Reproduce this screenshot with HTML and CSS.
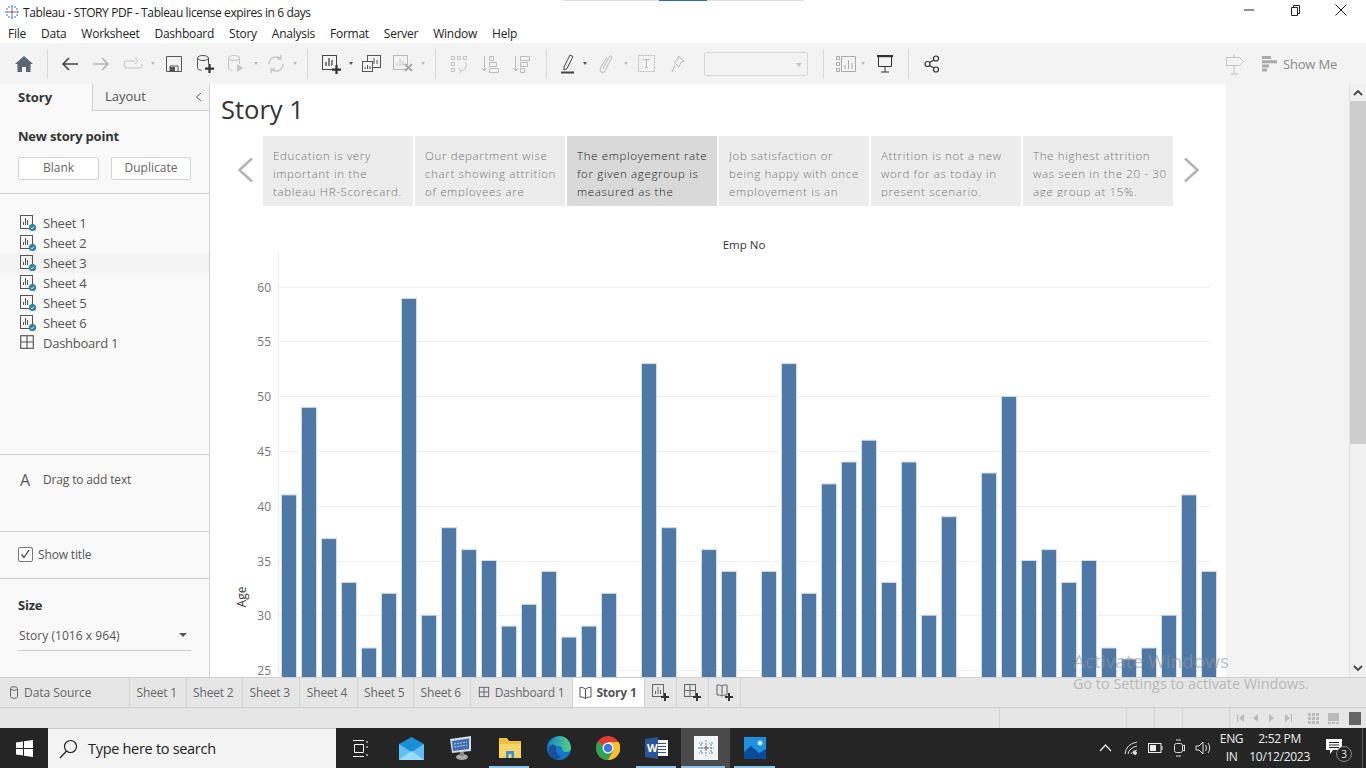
FILE: index.html
```html
<!DOCTYPE html>
<html lang="en">
<head>
    <meta charset="UTF-8">
    <title>Tableau - STORY PDF</title>
    <link rel="stylesheet" href="styles.css">
</head>
<body>

<svg class="defs" width="0" height="0">
    <defs>
        <linearGradient id="edgeTop" x1="0" y1="0" x2="1" y2="0">
            <stop offset="0" stop-color="#1b86c8"/>
            <stop offset="1" stop-color="#56cf7e"/>
        </linearGradient>
    </defs>
    <symbol id="sheet" viewBox="0 0 18 18">
        <rect x="1.5" y="1.5" width="12" height="12" fill="none" stroke="#555"/>
        <path d="M4.5 11V8M7.5 11V4M10.5 11V6" stroke="#555"/>
    </symbol>
    <symbol id="sheetok" viewBox="0 0 18 18">
        <rect x="1.5" y="1.5" width="12" height="13" fill="none" stroke="#555"/>
        <path d="M4.5 11V8M6.5 11V4M8.5 11V6" stroke="#555"/>
        <circle cx="13.5" cy="13.5" r="3.6" fill="#2f7f9f"/>
        <path d="M11.8 13.6l1.2 1.2 2-2.2" fill="none" stroke="#fff"/>
    </symbol>
    <symbol id="dash" viewBox="0 0 14 14">
        <rect x="1.5" y="1.5" width="11" height="11" fill="none" stroke="#555"/>
        <path d="M7 1.5v11M1.5 7h11" stroke="#555"/>
    </symbol>
    <symbol id="plus" viewBox="0 0 8 8">
        <path d="M4 0v8M0 4h8" stroke="#333" stroke-width="2"/>
    </symbol>
</svg>

<div class="app">
    <div class="loadbar"><span class="loadbar-on"></span></div>

    <!-- window title -->
    <header class="titlebar">
        <svg class="app-icon" width="18" height="18" viewBox="0 0 18 18">
            <path d="M9 2v14M2 9h14M4 5v8M14 5v8M5 4h8M5 14h8" stroke="#3f7fa6" stroke-dasharray="2 1"/>
            <path d="M7 9h4M9 7v4" stroke="#c25a4a"/>
        </svg>
        <span class="title-text">Tableau - STORY PDF - Tableau license expires in 6 days</span>
        <div class="win-buttons">
            <svg width="12" height="12" viewBox="0 0 12 12"><path d="M1 6h10" stroke="#222"/></svg>
            <svg width="12" height="12" viewBox="0 0 12 12"><path d="M2.5 3.5h6v8h-6zM4.5 3.5v-2h6v8h-2" fill="none" stroke="#222"/></svg>
            <svg width="12" height="12" viewBox="0 0 12 12"><path d="M.5.5l11 11M11.5.5l-11 11" stroke="#222"/></svg>
        </div>
    </header>

    <nav class="menubar">
        <span>File</span><span>Data</span><span>Worksheet</span><span>Dashboard</span><span>Story</span><span>Analysis</span><span>Format</span><span>Server</span><span>Window</span><span>Help</span>
    </nav>

    <!-- main toolbar -->
    <div class="toolbar">
        <span class="tool"><svg width="18" height="16" viewBox="0 0 18 16"><path d="M9 0L0 8h2.500v8h4.500v-5h4v5h4.500V8H18z" fill="#5b6670"/></svg></span>
        <i class="sep sep-home"></i>
        <span class="tool"><svg width="18" height="14" viewBox="0 0 18 14"><path d="M17 7H2M8 1L2 7l6 6" fill="none" stroke="#444" stroke-width="1.600"/></svg></span>
        <span class="tool"><svg width="18" height="14" viewBox="0 0 18 14"><path d="M1 7h15M10 1l6 6-6 6" fill="none" stroke="#b5b5b5" stroke-width="1.600"/></svg></span>
        <span class="tool tool-redo"><svg width="20" height="12" viewBox="0 0 20 12"><path d="M12 3H4Q1 3 1 6v1q0 3 3 3h12q3 0 3-3V6M12 0l3 3-3 3" fill="none" stroke="#c4c4c4"/></svg></span>
        <span class="caret"></span>
        <span class="tool"><svg width="16" height="16" viewBox="0 0 16 16"><path d="M.5.500h15v15H.500zM4 15.500V10h8v5.500" fill="none" stroke="#555"/><rect x="4" y="11" width="5" height="4.500" fill="#555"/></svg></span>
        <span class="tool"><svg width="18" height="18" viewBox="0 0 18 18"><ellipse cx="7" cy="3" rx="5.500" ry="2.500" fill="none" stroke="#555"/><path d="M1.500 3v10q0 2 4 2.300M12.500 3v6" fill="none" stroke="#555"/><use href="#plus" x="9" y="9" width="9" height="9"/></svg></span>
        <span class="tool"><svg width="18" height="18" viewBox="0 0 18 18"><ellipse cx="7" cy="3" rx="5.500" ry="2.500" fill="none" stroke="#c4c4c4"/><path d="M1.500 3v10q0 2 4 2.300M12.500 3v6" fill="none" stroke="#c4c4c4"/><path d="M10 9l6 4-6 4z" fill="#c4c4c4"/></svg></span>
        <span class="caret"></span>
        <span class="tool tool-less"><svg width="18" height="18" viewBox="0 0 18 18"><path d="M2 9a7 7 0 0 1 12-5M16 9a7 7 0 0 1-12 5M14 0v4h-4M4 18v-4h4" fill="none" stroke="#c4c4c4" stroke-width="1.300"/></svg></span>
        <span class="caret"></span>
        <i class="sep"></i>
        <span class="tool"><svg width="20" height="20" viewBox="0 0 20 20"><rect x="1.500" y="1.500" width="14" height="14" fill="none" stroke="#444"/><path d="M5 12V8M8 12V4M11 12V6" stroke="#444" stroke-width="1.300"/><rect x="11" y="11" width="9" height="9" fill="#f3f3f3"/><use href="#plus" x="11" y="11" width="9" height="9"/></svg></span>
        <span class="caret caret-dark"></span>
        <span class="tool"><svg width="19" height="18" viewBox="0 0 19 18"><rect x="5.500" y=".5" width="13" height="12" fill="#f3f3f3" stroke="#555"/><path d="M9 9V7M12 9V3M15 9V5" stroke="#555"/><rect x=".5" y="6.500" width="10" height="10" fill="#f3f3f3" stroke="#555"/><path d="M3 14v-2M5.500 14v-4M8 14v-3" stroke="#555"/></svg></span>
        <span class="tool"><svg width="20" height="18" viewBox="0 0 20 18"><rect x=".5" y=".5" width="14" height="14" fill="none" stroke="#bbb"/><path d="M4 11V8M7 11V4M10 11V6" stroke="#bbb"/><path d="M12 9l7 7M19 9l-7 7" stroke="#aaa" stroke-width="2"/></svg></span>
        <span class="caret"></span>
        <i class="sep"></i>
        <span class="tool"><svg width="20" height="18" viewBox="0 0 20 18" fill="none" stroke="#c4c4c4"><path d="M2.500 1.500h3v3h-3zM8.500 1.500h3v3h-3zM14.500 1.500h3v3h-3zM2.500 7.500h3v3h-3zM2.500 13.500h3v3h-3zM17 7v5q0 3-5 4M9 13l3 3-1 2"/></svg></span>
        <span class="tool"><svg width="18" height="18" viewBox="0 0 18 18" fill="none" stroke="#bbb"><path d="M3.500 1v15M1 13l2.500 3L6 13M8.500 1.500h4v4h-4zM8.500 7.500h7v4h-7zM8.500 13.500h9v4h-9z"/></svg></span>
        <span class="tool"><svg width="18" height="18" viewBox="0 0 18 18" fill="none" stroke="#bbb"><path d="M3.500 1v15M1 13l2.500 3L6 13M8.500 1.500h9v4h-9zM8.500 7.500h7v4h-7zM8.500 13.500h4v4h-4z"/></svg></span>
        <i class="sep sep-wide"></i>
        <span class="tool tool-tight"><svg width="14" height="20" viewBox="0 0 14 20"><path d="M3 13L9 1l3 1.500-6 12-3 1.500z" fill="none" stroke="#444"/><path d="M0 18.500h13" stroke="#444" stroke-width="2"/></svg></span>
        <span class="caret caret-dark"></span>
        <span class="tool"><svg width="14" height="20" viewBox="0 0 14 20"><path d="M4 15L10 3q2-3 3 0L6 17q-2 3-4 1t0-5l6-10" fill="none" stroke="#bbb"/></svg></span>
        <span class="caret"></span>
        <span class="tool"><svg width="17" height="17" viewBox="0 0 17 17"><rect x=".5" y=".5" width="16" height="16" fill="none" stroke="#bbb" stroke-dasharray="2 1"/><path d="M5 4.500h7M8.500 4.500v8M7 12.500h3" fill="none" stroke="#bbb"/></svg></span>
        <span class="tool"><svg width="14" height="18" viewBox="0 0 14 18"><path d="M7 1l6 5-3 1-2 5-5-5 4-2zM4 10l-3 7" fill="none" stroke="#bbb"/></svg></span>
        <span class="tb-select"></span>
        <i class="sep sep-after-select"></i>
        <span class="tool tool-tight"><svg width="20" height="16" viewBox="0 0 20 16" fill="none" stroke="#aaa"><path d="M.5.500h3v3h-3zM.5 6.500h3v3h-3zM.5 12.500h3v3h-3zM5.500.5h14v15h-14zM9 13V9M12.500 13V4M16 13V7"/></svg></span>
        <span class="caret"></span>
        <span class="tool tool-present"><svg width="18" height="18" viewBox="0 0 18 18" fill="none" stroke="#333"><path d="M1 1h16" stroke-width="2.400"/><path d="M2.500 2v9.500h13V2M9 11.500V17M5 17h8"/></svg></span>
        <i class="sep sep-share"></i>
        <span class="tool"><svg width="16" height="18" viewBox="0 0 16 18" fill="none" stroke="#333" stroke-width="1.200"><circle cx="3.500" cy="9" r="2.500"/><circle cx="12" cy="3.500" r="2.500"/><circle cx="12" cy="14.500" r="2.500"/><path d="M5.600 7.600l4.300-2.700M5.600 10.400l4.300 2.700"/></svg></span>
        <div class="toolbar-right">
            <svg width="20" height="22" viewBox="0 0 20 22" fill="none" stroke="#c4c4c4"><path d="M1.500 4.500h13l4 4-4 4h-13zM9 1v3M9 13v8M5 21h8"/></svg>
            <svg class="showme-bars" width="15" height="16" viewBox="0 0 15 16" fill="#aaa"><path d="M0 0h9v3H0zM0 4.200h15v3H0zM0 8.400h7v3H0zM0 12.600h5v3H0z"/></svg>
            <span class="showme">Show Me</span>
        </div>
    </div>

    <div class="main">
        <!-- left pane -->
        <aside class="side">
            <div class="side-tabs">
                <span class="side-tab side-tab-on">Story</span>
                <span class="side-tab">Layout<svg class="collapse" width="7" height="10" viewBox="0 0 7 10"><path d="M6 1L1.500 5 6 9" fill="none" stroke="#555"/></svg></span>
            </div>
            <section class="side-new">
                <h3 class="side-head">New story point</h3>
                <div class="side-btns">
                    <button class="side-btn side-btn-blank">Blank</button>
                    <button class="side-btn side-btn-dup">Duplicate</button>
                </div>
            </section>
            <section class="side-sheets">
                <div class="sheet-row"><svg width="18" height="18"><use href="#sheetok"/></svg>Sheet 1</div>
                <div class="sheet-row"><svg width="18" height="18"><use href="#sheetok"/></svg>Sheet 2</div>
                <div class="sheet-row sheet-row-hover"><svg width="18" height="18"><use href="#sheetok"/></svg>Sheet 3</div>
                <div class="sheet-row"><svg width="18" height="18"><use href="#sheetok"/></svg>Sheet 4</div>
                <div class="sheet-row"><svg width="18" height="18"><use href="#sheetok"/></svg>Sheet 5</div>
                <div class="sheet-row"><svg width="18" height="18"><use href="#sheetok"/></svg>Sheet 6</div>
                <div class="sheet-row"><svg width="18" height="18" viewBox="0 0 18 18"><use href="#dash" width="16" height="16"/></svg>Dashboard 1</div>
            </section>
            <section class="side-text">
                <span class="side-a">A</span>
                <span>Drag to add text</span>
            </section>
            <section class="side-title">
                <span class="checkbox"><svg width="11" height="10" viewBox="0 0 11 10"><path d="M1.500 5.500l2.500 3 5-7.500" fill="none" stroke="#444" stroke-width="1.300"/></svg></span>
                <span>Show title</span>
            </section>
            <section class="side-size">
                <h3 class="side-head">Size</h3>
                <div class="size-select">Story (1016 x 964)<span class="size-caret"></span></div>
            </section>
        </aside>

        <!-- story canvas -->
        <main class="canvas">
            <h1 class="story-title">Story 1</h1>
            <div class="points">
                <svg class="point-arrow" width="17" height="26" viewBox="0 0 17 26"><path d="M15 1.500L2.500 13 15 24.500" fill="none" stroke="#b4b4b4" stroke-width="2.600"/></svg>
                <div class="point"><p>Education is very<br>important in the<br>tableau HR-Scorecard.</p></div>
                <div class="point"><p>Our department wise<br>chart showing attrition<br>of employees are</p></div>
                <div class="point point-on"><p>The employement rate<br>for given agegroup is<br>measured as the</p></div>
                <div class="point"><p>Job satisfaction or<br>being happy with once<br>employement is an</p></div>
                <div class="point"><p>Attrition is not a new<br>word for as today in<br>present scenario.</p></div>
                <div class="point"><p>The highest attrition<br>was seen in the 20 - 30<br>age group at 15%.</p></div>
                <svg class="point-arrow point-arrow-next" width="17" height="26" viewBox="0 0 17 26"><path d="M2 1.500L14.500 13 2 24.500" fill="none" stroke="#b4b4b4" stroke-width="2.600"/></svg>
            </div>

            <svg class="chart" width="1016" height="447" viewBox="210 230 1016 447">
                <text class="chart-title" x="744" y="249" text-anchor="middle">Emp No</text>
                <path class="axis" d="M278.500 252V677"/>
                <path class="grid" d="M279 287.500H1210M279 341.500H1210M279 396.500H1210M279 451.500H1210M279 506.500H1210M279 561.500H1210M279 615.500H1210M279 670.500H1210"/>
                <g class="ticks">
                    <text x="271" y="292">60</text>
                    <text x="271" y="346">55</text>
                    <text x="271" y="401">50</text>
                    <text x="271" y="456">45</text>
                    <text x="271" y="511">40</text>
                    <text x="271" y="566">35</text>
                    <text x="271" y="620">30</text>
                    <text x="271" y="675">25</text>
                </g>
                <text class="axis-name" transform="translate(246 597) rotate(-90)" text-anchor="middle">Age</text>
                <g class="bars">
                    <rect x="281.500" y="494.900" width="15" height="300"/>
                    <rect x="301.500" y="407.300" width="15" height="300"/>
                    <rect x="321.500" y="538.600" width="15" height="300"/>
                    <rect x="341.500" y="582.400" width="15" height="300"/>
                    <rect x="361.500" y="648.000" width="15" height="300"/>
                    <rect x="381.500" y="593.300" width="15" height="300"/>
                    <rect x="401.500" y="298.500" width="15" height="400"/>
                    <rect x="421.500" y="615.200" width="15" height="300"/>
                    <rect x="441.500" y="527.700" width="15" height="300"/>
                    <rect x="461.500" y="549.600" width="15" height="300"/>
                    <rect x="481.500" y="560.500" width="15" height="300"/>
                    <rect x="501.500" y="626.100" width="15" height="300"/>
                    <rect x="521.500" y="604.300" width="15" height="300"/>
                    <rect x="541.500" y="571.400" width="15" height="300"/>
                    <rect x="561.500" y="637.100" width="15" height="300"/>
                    <rect x="581.500" y="626.100" width="15" height="300"/>
                    <rect x="601.500" y="593.300" width="15" height="300"/>
                    <rect x="641.500" y="363.600" width="15" height="400"/>
                    <rect x="661.500" y="527.700" width="15" height="300"/>
                    <rect x="701.500" y="549.600" width="15" height="300"/>
                    <rect x="721.500" y="571.400" width="15" height="300"/>
                    <rect x="761.500" y="571.400" width="15" height="300"/>
                    <rect x="781.500" y="363.600" width="15" height="400"/>
                    <rect x="801.500" y="593.300" width="15" height="300"/>
                    <rect x="821.500" y="483.900" width="15" height="300"/>
                    <rect x="841.500" y="462.000" width="15" height="300"/>
                    <rect x="861.500" y="440.200" width="15" height="300"/>
                    <rect x="881.500" y="582.400" width="15" height="300"/>
                    <rect x="901.500" y="462.000" width="15" height="300"/>
                    <rect x="921.500" y="615.200" width="15" height="300"/>
                    <rect x="941.500" y="516.700" width="15" height="300"/>
                    <rect x="981.500" y="473.000" width="15" height="300"/>
                    <rect x="1001.500" y="396.400" width="15" height="400"/>
                    <rect x="1021.500" y="560.500" width="15" height="300"/>
                    <rect x="1041.500" y="549.600" width="15" height="300"/>
                    <rect x="1061.500" y="582.400" width="15" height="300"/>
                    <rect x="1081.500" y="560.500" width="15" height="300"/>
                    <rect x="1101.500" y="648.000" width="15" height="300"/>
                    <rect x="1121.500" y="659.000" width="15" height="300"/>
                    <rect x="1141.500" y="648.000" width="15" height="300"/>
                    <rect x="1161.500" y="615.200" width="15" height="300"/>
                    <rect x="1181.500" y="494.900" width="15" height="300"/>
                    <rect x="1201.500" y="571.400" width="15" height="300"/>
                </g>
            </svg>
        </main>

        <div class="gutter"></div>
        <div class="scroll">
            <svg class="scroll-arrow" width="16" height="17" viewBox="0 0 16 17"><path d="M4 11l4-4 4 4" fill="none" stroke="#444" stroke-width="1.800"/></svg>
            <div class="scroll-thumb"></div>
            <svg class="scroll-arrow scroll-arrow-down" width="16" height="17" viewBox="0 0 16 17"><path d="M4 6l4 4 4-4" fill="none" stroke="#444" stroke-width="1.800"/></svg>
        </div>
    </div>

    <!-- sheet tabs -->
    <div class="tabs">
        <span class="tab tab-source"><svg width="10" height="13" viewBox="0 0 10 13" fill="none" stroke="#666"><ellipse cx="5" cy="2.500" rx="3.500" ry="1.800"/><path d="M1.500 2.500v8q0 1.800 3.500 1.800t3.500-1.800v-8"/></svg>Data Source</span>
        <span class="tab tab-sheet">Sheet 1</span>
        <span class="tab tab-sheet">Sheet 2</span>
        <span class="tab tab-sheet">Sheet 3</span>
        <span class="tab tab-sheet tab-sheet-wide">Sheet 4</span>
        <span class="tab tab-sheet">Sheet 5</span>
        <span class="tab tab-sheet">Sheet 6</span>
        <span class="tab tab-dash"><svg width="12" height="12"><use href="#dash" width="12" height="12"/></svg>Dashboard 1</span>
        <span class="tab tab-on"><svg width="13" height="13" viewBox="0 0 13 13" fill="none" stroke="#555"><path d="M6.500 3Q4 1 1 1.500v9.500Q4 10.500 6.500 12.500 9 10.500 12 11V1.500Q9 1 6.500 3zM6.500 3v9.500"/></svg>Story 1</span>
        <span class="tab tab-add"><svg width="17" height="17" viewBox="0 0 17 17"><rect x=".5" y=".5" width="11" height="12" fill="none" stroke="#666"/><path d="M3.500 10V7M6 10V3M8.500 10V6" stroke="#666"/><use href="#plus" x="9" y="9" width="8" height="8"/></svg></span>
        <span class="tab tab-add"><svg width="17" height="17" viewBox="0 0 17 17"><rect x=".5" y=".5" width="11" height="12" fill="none" stroke="#666"/><path d="M6 .5v12M.5 6.500h11" stroke="#666"/><use href="#plus" x="9" y="9" width="8" height="8"/></svg></span>
        <span class="tab tab-add"><svg width="17" height="17" viewBox="0 0 17 17"><path d="M6 2Q4 .5 1 1v10q3-.5 5 1 2-1.500 5-1V1Q8 .5 6 2zM6 2v10" fill="none" stroke="#666"/><use href="#plus" x="9" y="9" width="8" height="8"/></svg></span>
    </div>

    <div class="status">
        <i class="status-sep status-sep-a"></i>
        <i class="status-sep status-sep-b"></i>
        <i class="status-sep status-sep-c"></i>
        <i class="status-sep status-sep-c"></i>
        <i class="status-sep status-sep-d"></i>
        <svg class="status-nav" width="64" height="10" viewBox="0 0 64 10" fill="#bbb">
            <path d="M1 1h1v8H1zM8 1v8L3 5zM22 1v8l-5-4zM33 1l5 4-5 4zM49 1l5 4-5 4zM55 1h1v8h-1z"/>
        </svg>
        <svg class="status-views" width="54" height="13" viewBox="0 0 54 13">
            <path d="M1 1h3v3H1zM5 1h3v3H5zM9 1h3v3H9zM1 5h3v3H1zM5 5h3v3H5zM9 5h3v3H9zM1 9h3v3H1zM5 9h3v3H5zM9 9h3v3H9z" fill="#bbb"/>
            <path d="M21 1h11v8H21zM21 10h3v2h-3zM25 10h3v2h-3zM29 10h3v2h-3z" fill="#bbb"/>
            <rect x="42" y="0" width="12" height="13" fill="#666"/>
        </svg>
    </div>

    <!-- windows taskbar -->
    <footer class="taskbar">
        <span class="start"><svg width="17" height="17" viewBox="0 0 17 17" fill="#fff"><path d="M0 2.500l7-1v6.500H0zM8 1.300L17 0v8H8zM0 9h7v6.500l-7-1zM8 9h9v8l-9-1.300z"/></svg></span>
        <div class="search">
            <svg width="19" height="20" viewBox="0 0 19 20" fill="none" stroke="#222" stroke-width="1.200"><circle cx="11.500" cy="7.500" r="6"/><path d="M7.500 12L1 19"/></svg>
            <span>Type here to search</span>
        </div>
        <span class="task task-view"><svg width="17" height="17" viewBox="0 0 17 17" fill="none" stroke="#fff"><path d="M1 .5h11M1 16.500h11M2.500 4.500h9v8h-9zM15 1v2M15 6v2M15 14v2" /></svg></span>
        <span class="task"><svg width="25" height="23" viewBox="0 0 25 23"><path d="M0 7L12.500 0 25 7v16H0z" fill="#1a8fd6"/><path d="M0 7l12.500 8L25 7v16H0z" fill="#5fc0f2"/><path d="M0 23l12.500-9L25 23z" fill="#9adcfa"/></svg></span>
        <span class="task"><svg width="24" height="24" viewBox="0 0 24 24"><path d="M1 3l21-3v15L3 17z" fill="#d5dbe3"/><path d="M3 5l17-2.500V13L4 15z" fill="#3c6cb5"/><path d="M5 8l13-2M5 11l13-2" stroke="#bcd4f0" stroke-dasharray="2 1"/><ellipse cx="13" cy="21" rx="6" ry="3" fill="#aaa"/><rect x="11" y="16" width="4" height="4" fill="#888"/></svg></span>
        <span class="task"><svg width="22" height="20" viewBox="0 0 22 20"><path d="M0 0h8l2 3h12v17H0z" fill="#f0c040"/><path d="M0 6h22v14H0z" fill="#f7d668"/><path d="M7 13h8v7H7z" fill="#3f8fd6"/><path d="M9.500 16h3v4h-3z" fill="#f7d668"/></svg></span>
        <span class="task"><svg width="24" height="24" viewBox="0 0 24 24"><circle cx="12" cy="12" r="12" fill="#0f78c8"/><path d="M1 10Q4 1 13 .1 23 1 24 12q0 4-5 4-4 0-4-3 0-3-4-3-6 0-10 0z" fill="url(#edgeTop)"/><path d="M9 14q0 5 6 7-9 5-13-3-2-6 2-9 5-2 5 5z" fill="#1b4e9c"/></svg></span>
        <span class="task"><svg width="24" height="24" viewBox="0 0 24 24"><circle cx="12" cy="12" r="12" fill="#e33b2e"/><path d="M12 12L1.600 6A12 12 0 0 0 12 24l5-9z" fill="#2da44e"/><path d="M12 6h10.600A12 12 0 0 1 12 24l5.200-9z" fill="#fbc02d"/><circle cx="12" cy="12" r="5.500" fill="#fff"/><circle cx="12" cy="12" r="4.300" fill="#3b78e7"/></svg></span>
        <span class="task"><svg width="23" height="22" viewBox="0 0 23 22"><rect x="9" y="3" width="14" height="16" fill="#fff"/><path d="M13 6.500h8M13 9.500h8M13 12.500h8M13 15.500h8" stroke="#2a5699"/><path d="M0 2l13-2v22L0 20z" fill="#2a5699"/><text class="word-w" x="2" y="15">W</text></svg></span>
        <span class="task task-on"><span class="tableau-tile"><svg width="18" height="18" viewBox="0 0 18 18"><path d="M9 1v16M1 9h16M4 5v8M14 5v8M6 4h-4M16 4h-4M6 14H2M16 14h-4" stroke="#4a88ad" stroke-dasharray="2 1"/><path d="M6.500 9h5M9 6.500v5" stroke="#a66"/></svg></span></span>
        <span class="task"><svg width="22" height="22" viewBox="0 0 22 22"><rect width="22" height="22" fill="#1f8fe0"/><path d="M0 22V15l7-6 8 7 7-4v10z" fill="#0b4a94"/><circle cx="16" cy="6" r="2.500" fill="#bfe4fb"/></svg></span>
        <i class="task-mark task-mark-a"></i>
        <i class="task-mark task-mark-b"></i>
        <i class="task-mark task-mark-c"></i>
        <i class="task-mark task-mark-d"></i>

        <div class="tray">
            <svg class="tray-chev" width="13" height="8" viewBox="0 0 13 8"><path d="M1 7l5.500-6L12 7" fill="none" stroke="#eee" stroke-width="1.200"/></svg>
            <svg width="14" height="14" viewBox="0 0 14 14" fill="none" stroke="#ddd"><path d="M1 13Q2 3 13 1M4 13q1-6 9-8M7 13q1-3 6-4"/><circle cx="11" cy="12" r="1.500" fill="#ddd"/></svg>
            <svg width="15" height="10" viewBox="0 0 15 10"><rect x=".5" y=".5" width="12.500" height="9" fill="none" stroke="#eee"/><rect x="2" y="2" width="6" height="6" fill="#eee"/><path d="M14 3v4" stroke="#eee"/></svg>
            <svg width="12" height="18" viewBox="0 0 12 18" fill="none" stroke="#ddd"><rect x="1.500" y="4.500" width="8" height="9" rx="2"/><path d="M10 7l1.500-1v6L10 11M3 1h5M3 17h5"/></svg>
            <svg width="16" height="14" viewBox="0 0 16 14" fill="none" stroke="#ddd"><path d="M1 5h3l4-4v12L4 9H1zM10.500 4q2 3 0 6M13 2q3.500 5 0 10"/></svg>
            <div class="tray-lang"><span>ENG</span><span>IN</span></div>
            <div class="tray-clock"><span>2:52 PM</span><span>10/12/2023</span></div>
            <div class="tray-note">
                <svg width="16" height="15" viewBox="0 0 16 15"><path d="M0 0h16v11H7l-3 4v-4H0z" fill="#fff"/><path d="M3 3.500h10M3 6h10M3 8.500h10" stroke="#222"/></svg>
                <span class="tray-badge">3</span>
            </div>
            <i class="tray-end"></i>
        </div>
    </footer>

    <!-- watermark sits over the chart -->
    <div class="watermark">
        <div class="watermark-big">Activate Windows</div>
        <div class="watermark-small">Go to Settings to activate Windows.</div>
    </div>
</div>

</body>
</html>
```

FILE: styles.css
```css
* {
    box-sizing: border-box;
}
body {
    margin: 0;
    font-family: "Open Sans", sans-serif;
    color: #333;
    background: #fff;
}
.defs {
    position: absolute;
}
svg {
    display: block;
    flex: none;
}
.app {
    position: relative;
    width: 1366px;
    height: 768px;
    display: flex;
    flex-direction: column;
    overflow: hidden;
}

/* top of window */
.loadbar {
    position: absolute;
    left: 563px;
    top: 0;
    width: 241px;
    height: 1px;
    background: #ddd;
}
.loadbar-on {
    display: block;
    margin-left: 96px;
    width: 48px;
    height: 1px;
    background: #2b6cb0;
}
.titlebar {
    height: 24px;
    display: flex;
    align-items: center;
    padding-left: 3px;
}
.app-icon {
    margin-right: 2px;
}
.title-text {
    font-size: 12px;
    color: #222;
    letter-spacing: -0.38px;
    white-space: nowrap;
}
.win-buttons {
    margin-left: auto;
    display: flex;
    gap: 34px;
    padding-right: 19px;
    margin-top: -4px;
}
.menubar {
    height: 19px;
    display: flex;
    gap: 15px;
    align-items: center;
    padding-left: 8px;
    font-size: 12px;
    letter-spacing: -0.25px;
    color: #222;
}

/* toolbar */
.toolbar {
    height: 41px;
    flex: none;
    background: #f3f3f3;
    display: flex;
    align-items: center;
    padding-left: 8px;
}
.tool {
    width: 31px;
    display: flex;
    justify-content: center;
}
.tool-redo {
    margin-left: 1px;
}
.tool-less {
    width: 29px;
}
.tool-tight {
    width: 24px;
}
.tool-present {
    margin-left: 1px;
}
.caret {
    width: 10px;
    height: 3px;
    position: relative;
}
.caret::after {
    content: "";
    position: absolute;
    left: 3px;
    top: 0;
    border: 2.5px solid transparent;
    border-top: 3px solid #bbb;
    border-bottom: 0;
}
.caret-dark::after {
    border-top-color: #555;
}
.sep {
    width: 1px;
    height: 30px;
    margin: 0 7px;
    background: #d9d9d9;
}
.sep-home {
    margin: 0 6px 0 8px;
}
.sep-wide {
    margin: 0 9px 0 10px;
}
.sep-after-select {
    margin-left: 15px;
    margin-right: 10px;
}
.sep-share {
    margin-left: 8px;
}
.tb-select {
    width: 104px;
    height: 24px;
    margin-left: 11px;
    border: 1px solid #d8d8d8;
    border-radius: 2px;
    position: relative;
}
.tb-select::after {
    content: "";
    position: absolute;
    right: 5px;
    top: 10px;
    border: 3px solid transparent;
    border-top: 4px solid #c4c4c4;
    border-bottom: 0;
}
.toolbar-right {
    margin-left: auto;
    display: flex;
    align-items: center;
    padding-right: 29px;
}
.showme-bars {
    margin-left: 17px;
    margin-right: 6px;
}
.showme {
    font-size: 13px;
    color: #8a8a8a;
    letter-spacing: -0.2px;
}

/* layout of the middle */
.main {
    height: 593px;
    flex: none;
    display: flex;
}
.side {
    width: 210px;
    background: #f9f9f9;
    border-right: 1px solid #cfcfcf;
    display: flex;
    flex-direction: column;
    font-size: 12px;
    color: #555;
}
.side-tabs {
    height: 27px;
    display: flex;
}
.side-tab {
    display: flex;
    align-items: center;
    font-size: 13px;
    position: relative;
    width: 117px;
    padding-left: 12px;
    padding-bottom: 2px;
    background: #f3f3f3;
    border-left: 1px solid #cfcfcf;
    border-bottom: 1px solid #cfcfcf;
}
.side-tab-on {
    width: 92px;
    padding-left: 18px;
    background: transparent;
    border: 0;
    font-weight: 700;
    color: #333;
}
.collapse {
    position: absolute;
    right: 7px;
    top: 8px;
}
.side-new {
    height: 83px;
    padding: 16px 18px 0;
    border-bottom: 1px solid #cfcfcf;
}
.side-head {
    margin: 0;
    font-size: 13px;
    font-weight: 700;
    line-height: 18px;
    color: #333;
    letter-spacing: -0.2px;
}
.side-btns {
    display: flex;
    gap: 12px;
    margin-top: 12px;
}
.side-btn {
    height: 23px;
    padding: 0 0 2px;
    font: 12px "Open Sans", sans-serif;
    color: #666;
    background: #fff;
    border: 1px solid #d4d4d4;
    border-radius: 2px;
}
.side-btn-blank {
    width: 81px;
}
.side-btn-dup {
    width: 80px;
}
.side-sheets {
    height: 261px;
    padding-top: 19px;
    border-bottom: 1px solid #cfcfcf;
}
.sheet-row {
    height: 20px;
    display: flex;
    align-items: center;
    gap: 6px;
    padding-left: 19px;
    font-size: 13px;
    letter-spacing: -0.25px;
}
.sheet-row-hover {
    background: #f3f3f3;
}
.side-text {
    height: 77px;
    display: flex;
    align-items: flex-start;
    padding: 15px 0 0 20px;
    border-bottom: 1px solid #cfcfcf;
    line-height: 20px;
    letter-spacing: -0.15px;
}
.side-a {
    width: 23px;
    font-size: 16px;
}
.side-title {
    height: 47px;
    display: flex;
    align-items: center;
    gap: 5px;
    padding-left: 18px;
    padding-bottom: 2px;
    border-bottom: 1px solid #cfcfcf;
    letter-spacing: -0.15px;
}
.checkbox {
    width: 15px;
    height: 15px;
    display: flex;
    align-items: center;
    justify-content: center;
    background: #fff;
    border: 1px solid #777;
    border-radius: 2px;
}
.side-size {
    padding: 17px 18px 0;
}
.size-select {
    margin-top: 10px;
    height: 27px;
    padding: 0 4px 4px 1px;
    display: flex;
    justify-content: space-between;
    align-items: center;
    border-bottom: 1px solid #cfcfcf;
    letter-spacing: 0.05px;
}
.size-caret {
    border: 4px solid transparent;
    border-top: 4px solid #555;
    border-bottom: 0;
}

/* story canvas */
.canvas {
    width: 1016px;
    background: #fff;
    overflow: hidden;
}
.story-title {
    margin: 0;
    padding: 9px 0 0 11px;
    height: 52px;
    font-size: 25.5px;
    font-weight: 400;
    line-height: 32px;
    color: #333;
}
.points {
    display: flex;
    align-items: center;
    gap: 2px;
    height: 70px;
    padding-left: 27px;
}
.point-arrow {
    margin-right: 7px;
    margin-top: -2px;
}
.point-arrow-next {
    margin: -2px 0 0 8px;
}
.point {
    width: 150px;
    height: 70px;
    padding: 11px 0 0 10px;
    background: #ececec;
    color: #777;
}
.point p {
    margin: 0;
    height: 50px;
    overflow: hidden;
    font-size: 11.5px;
    font-weight: 300;
    letter-spacing: 0.65px;
    line-height: 18px;
    white-space: nowrap;
}
.point-on {
    background: #d9d9d9;
    color: #222;
}
.chart {
    margin-top: 24px;
}
.chart-title {
    font-size: 11.5px;
    fill: #333;
}
.axis {
    stroke: #eee;
    fill: none;
}
.grid {
    stroke: #efefef;
    fill: none;
}
.ticks text {
    font-size: 12px;
    fill: #777;
    text-anchor: end;
}
.axis-name {
    font-size: 12px;
    fill: #333;
}
.bars rect {
    fill: #4e79a7;
    stroke: #d3dce6;
}

.gutter {
    flex: 1;
    background: #f3f3f3;
}
.scroll {
    width: 17px;
    background: #f0f0f0;
    border-left: 1px solid #e4e4e4;
    display: flex;
    flex-direction: column;
}
.scroll-thumb {
    height: 343px;
    background: #cdcdcd;
}
.scroll-arrow-down {
    margin-top: auto;
}

/* tabs at the bottom */
.tabs {
    height: 31px;
    flex: none;
    display: flex;
    background: #e6e6e6;
    border-top: 1px solid #cfcfcf;
    border-bottom: 1px solid #cfcfcf;
    font-size: 12px;
    letter-spacing: -0.2px;
    color: #666;
}
.tab {
    display: flex;
    align-items: center;
    justify-content: center;
    padding-bottom: 1px;
    border-right: 1px solid #d2d2d2;
    white-space: nowrap;
}
.tab-source {
    width: 130px;
    justify-content: flex-start;
    padding-left: 9px;
    gap: 5px;
    letter-spacing: -0.05px;
}
.tab-sheet {
    width: 56.5px;
    padding-right: 2px;
}
.tab-sheet-wide {
    width: 58px;
}
.tab-dash {
    width: 102px;
    gap: 5px;
}
.tab-on {
    width: 72px;
    gap: 4px;
    background: #fff;
    font-weight: 700;
    color: #555;
}
.tab-add {
    width: 32px;
}

.status {
    height: 20px;
    flex: none;
    background: #e6e6e6;
    position: relative;
    display: flex;
    align-items: center;
}
.status-sep {
    width: 1px;
    height: 20px;
    background: #d2d2d2;
}
.status-sep-a {
    margin-left: 999px;
}
.status-sep-b {
    margin-left: 126px;
}
.status-sep-c {
    margin-left: 27px;
}
.status-sep-d {
    margin-left: 46px;
}
.status-nav {
    margin-left: 6px;
}
.status-views {
    margin-left: 7px;
}

/* taskbar */
.taskbar {
    height: 40px;
    flex: none;
    background: #252525;
    display: flex;
    align-items: center;
    position: relative;
}
.start {
    width: 48px;
    display: flex;
    justify-content: center;
}
.search {
    width: 288px;
    height: 40px;
    background: #f3f3f3;
    display: flex;
    align-items: center;
    gap: 10px;
    padding-left: 11px;
    border-top: 1px solid #ccc;
    font-size: 14.5px;
    letter-spacing: -0.3px;
    color: #222;
}
.task {
    width: 49px;
    height: 40px;
    display: flex;
    align-items: center;
    justify-content: center;
}
.task-view {
    width: 48px;
    margin-right: 3px;
}
.task-on {
    background: #4a4a4a;
}
.tableau-tile {
    width: 24px;
    height: 24px;
    background: #f2f4f6;
    display: flex;
    align-items: center;
    justify-content: center;
}
.word-w {
    font-size: 11px;
    font-weight: 700;
    fill: #fff;
}
.task-mark {
    position: absolute;
    bottom: 0;
    height: 2px;
    background: #8fc3ea;
}
.task-mark-a {
    left: 489px;
    width: 40px;
}
.task-mark-b {
    left: 636px;
    width: 40px;
}
.task-mark-c {
    left: 681px;
    width: 44px;
}
.task-mark-d {
    left: 734px;
    width: 41px;
}
.tray {
    margin-left: auto;
    display: flex;
    align-items: center;
    gap: 10px;
    padding-right: 3px;
    color: #eee;
    font-size: 12px;
    height: 40px;
}
.tray-chev {
    margin-right: 2px;
}
.tray-lang,
.tray-clock {
    display: flex;
    flex-direction: column;
    align-items: center;
    line-height: 18px;
    letter-spacing: -0.3px;
}
.tray-lang {
    margin-left: -1px;
}
.tray-clock {
    margin-left: -4px;
}
.tray-note {
    position: relative;
    width: 26px;
    margin-left: 6px;
    margin-bottom: 3px;
}
.tray-badge {
    position: absolute;
    left: 10px;
    top: 7px;
    width: 16px;
    height: 16px;
    border: 1px solid #888;
    border-radius: 50%;
    background: #252525;
    font-size: 10px;
    line-height: 14px;
    text-align: center;
}
.tray-end {
    width: 1px;
    height: 40px;
    background: #555;
}

.watermark {
    position: absolute;
    left: 1073px;
    top: 648px;
    color: rgba(150, 150, 150, 0.6);
    pointer-events: none;
    white-space: nowrap;
}
.watermark-big {
    font-size: 19px;
    line-height: 26px;
}
.watermark-small {
    font-size: 14.4px;
    line-height: 20px;
}
```
